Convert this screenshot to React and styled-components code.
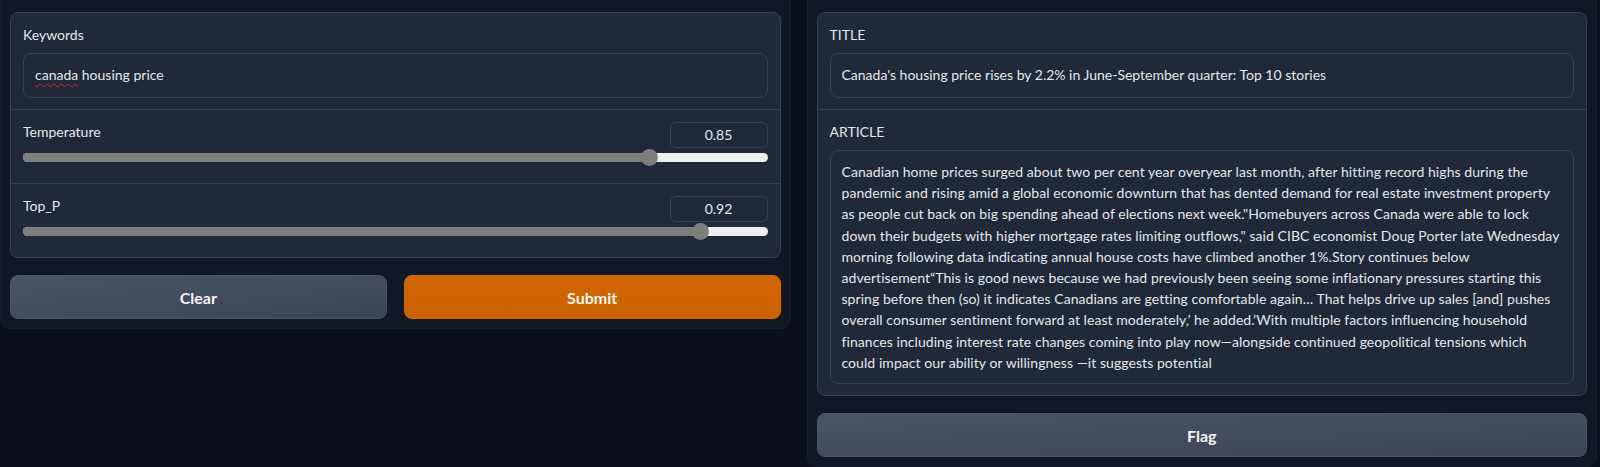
import React from 'react'
import styled, { createGlobalStyle } from 'styled-components'

const Global = createGlobalStyle`
  html, body {
    margin: 0;
    padding: 0;
    background: #0b0f19;
    overflow: hidden;
  }
  body {
    font-family: "Source Sans Pro", Lato, "Noto Sans", sans-serif;
    color: #e5e7eb;
  }
`

const Page = styled.div`
  display: flex;
  align-items: flex-start;
  gap: 16px;
  width: 100%;
  height: 467px;
  padding-right: 3px;
  box-sizing: border-box;
  overflow: hidden;
`

const Column = styled.div`
  flex: 1;
  min-width: 0;
  margin-top: -10px;
  padding: 21px 9px 9px 9px;
  background: #111725;
  border: 1px solid #161e2e;
  border-radius: 10px;
  display: flex;
  flex-direction: column;
  gap: 17px;
  box-sizing: border-box;
`

const Panel = styled.div`
  background: #1f2937;
  border: 1px solid #374151;
  border-radius: 8px;
  display: flex;
  flex-direction: column;
`

const Block = styled.div`
  padding: 12px 12px 11px 12px;
  border-top: ${p => (p.$first ? 'none' : '1px solid #374151')};
`

const Label = styled.div`
  font-size: 14px;
  line-height: 20px;
  color: #e5e7eb;
  margin-bottom: 8px;
`

const TextBox = styled.div`
  border: 1px solid #374151;
  border-radius: 8px;
  padding: 11px 11px 12px 11px;
  font-size: 14px;
  line-height: 20px;
  color: #e5e7eb;
  white-space: pre-wrap;
`

const Article = styled(TextBox)`
  padding-top: 10px;
  padding-bottom: 10px;
  line-height: 21.2px;
  letter-spacing: 0.06px;
  white-space: pre;
  overflow: hidden;
`

const Misspelled = styled.span`
  text-decoration: underline wavy #d22c2c;
  text-decoration-thickness: 1px;
  text-underline-offset: 3px;
`

const SliderHead = styled.div`
  display: flex;
  justify-content: space-between;
  align-items: center;
  margin-bottom: 4px;
`

const SliderLabel = styled(Label)`
  margin-bottom: 0;
  align-self: flex-start;
`

const NumberBox = styled.div`
  width: 98px;
  height: 26px;
  box-sizing: border-box;
  border: 1px solid #374151;
  border-radius: 6px;
  font-size: 14px;
  line-height: 24px;
  text-align: center;
  color: #e5e7eb;
`

const Track = styled.div`
  position: relative;
  height: 9px;
  border-radius: 5px;
  background: #efefef;
  margin: 5px 0 10px 0;
`

const Fill = styled.div`
  height: 100%;
  border-radius: 5px;
  background: #7e7e7e;
`

const Thumb = styled.div`
  position: absolute;
  top: 50%;
  width: 17px;
  height: 17px;
  margin-left: -8.5px;
  margin-top: -8.5px;
  border-radius: 50%;
  background: #7e7e7e;
`

const ButtonRow = styled.div`
  display: flex;
  gap: 17px;
`

const Button = styled.button`
  flex: 1;
  height: 44px;
  border-radius: 8px;
  font-family: inherit;
  font-size: 16px;
  font-weight: 700;
  color: ${p => (p.$primary ? '#fff7ed' : '#f3f4f6')};
  border: 1px solid ${p => (p.$primary ? '#d46c00' : '#4b5563')};
  background: ${p =>
    p.$primary
      ? 'linear-gradient(to bottom, #d06700, #c96100)'
      : 'linear-gradient(to bottom right, #4b5563, #3b4452)'};
  cursor: pointer;
`

const Slider = ({ label, value }) => {
  const pos = `calc(${value} * (100% - 17px) + 8.5px)`
  return (
    <Block>
      <SliderHead>
        <SliderLabel>{label}</SliderLabel>
        <NumberBox>{value}</NumberBox>
      </SliderHead>
      <Track>
        <Fill style={{ width: pos }} />
        <Thumb style={{ left: pos }} />
      </Track>
    </Block>
  )
}

// line breaks follow the original rendering
const article = [
  'Canadian home prices surged about two per cent year overyear last month, after hitting record highs during the',
  'pandemic and rising amid a global economic downturn that has dented demand for real estate investment property',
  'as people cut back on big spending ahead of elections next week."Homebuyers across Canada were able to lock',
  'down their budgets with higher mortgage rates limiting outflows," said CIBC economist Doug Porter late Wednesday',
  'morning following data indicating annual house costs have climbed another 1%.Story continues below',
  'advertisement\u201cThis is good news because we had previously been seeing some inflationary pressures starting this',
  'spring before then (so) it indicates Canadians are getting comfortable again\u2026 That helps drive up sales [and] pushes',
  'overall consumer sentiment forward at least moderately,\u2019 he added.\u2019With multiple factors influencing household',
  'finances including interest rate changes coming into play now\u2014alongside continued geopolitical tensions which',
  'could impact our ability or willingness \u2014it suggests potential',
].join('\n')

export default function App() {
  return (
    <Page>
      <Global />
      <Column>
        <Panel>
          <Block $first>
            <Label>Keywords</Label>
            <TextBox>
              <Misspelled>canada</Misspelled> housing price
            </TextBox>
          </Block>
          <Slider label="Temperature" value={0.85} />
          <Slider label="Top_P" value={0.92} />
        </Panel>
        <ButtonRow>
          <Button>Clear</Button>
          <Button $primary>Submit</Button>
        </ButtonRow>
      </Column>
      <Column>
        <Panel>
          <Block $first>
            <Label>TITLE</Label>
            <TextBox>Canada's housing price rises by 2.2% in June-September quarter: Top 10 stories</TextBox>
          </Block>
          <Block>
            <Label>ARTICLE</Label>
            <Article>{article}</Article>
          </Block>
        </Panel>
        <ButtonRow>
          <Button>Flag</Button>
        </ButtonRow>
      </Column>
    </Page>
  )
}
